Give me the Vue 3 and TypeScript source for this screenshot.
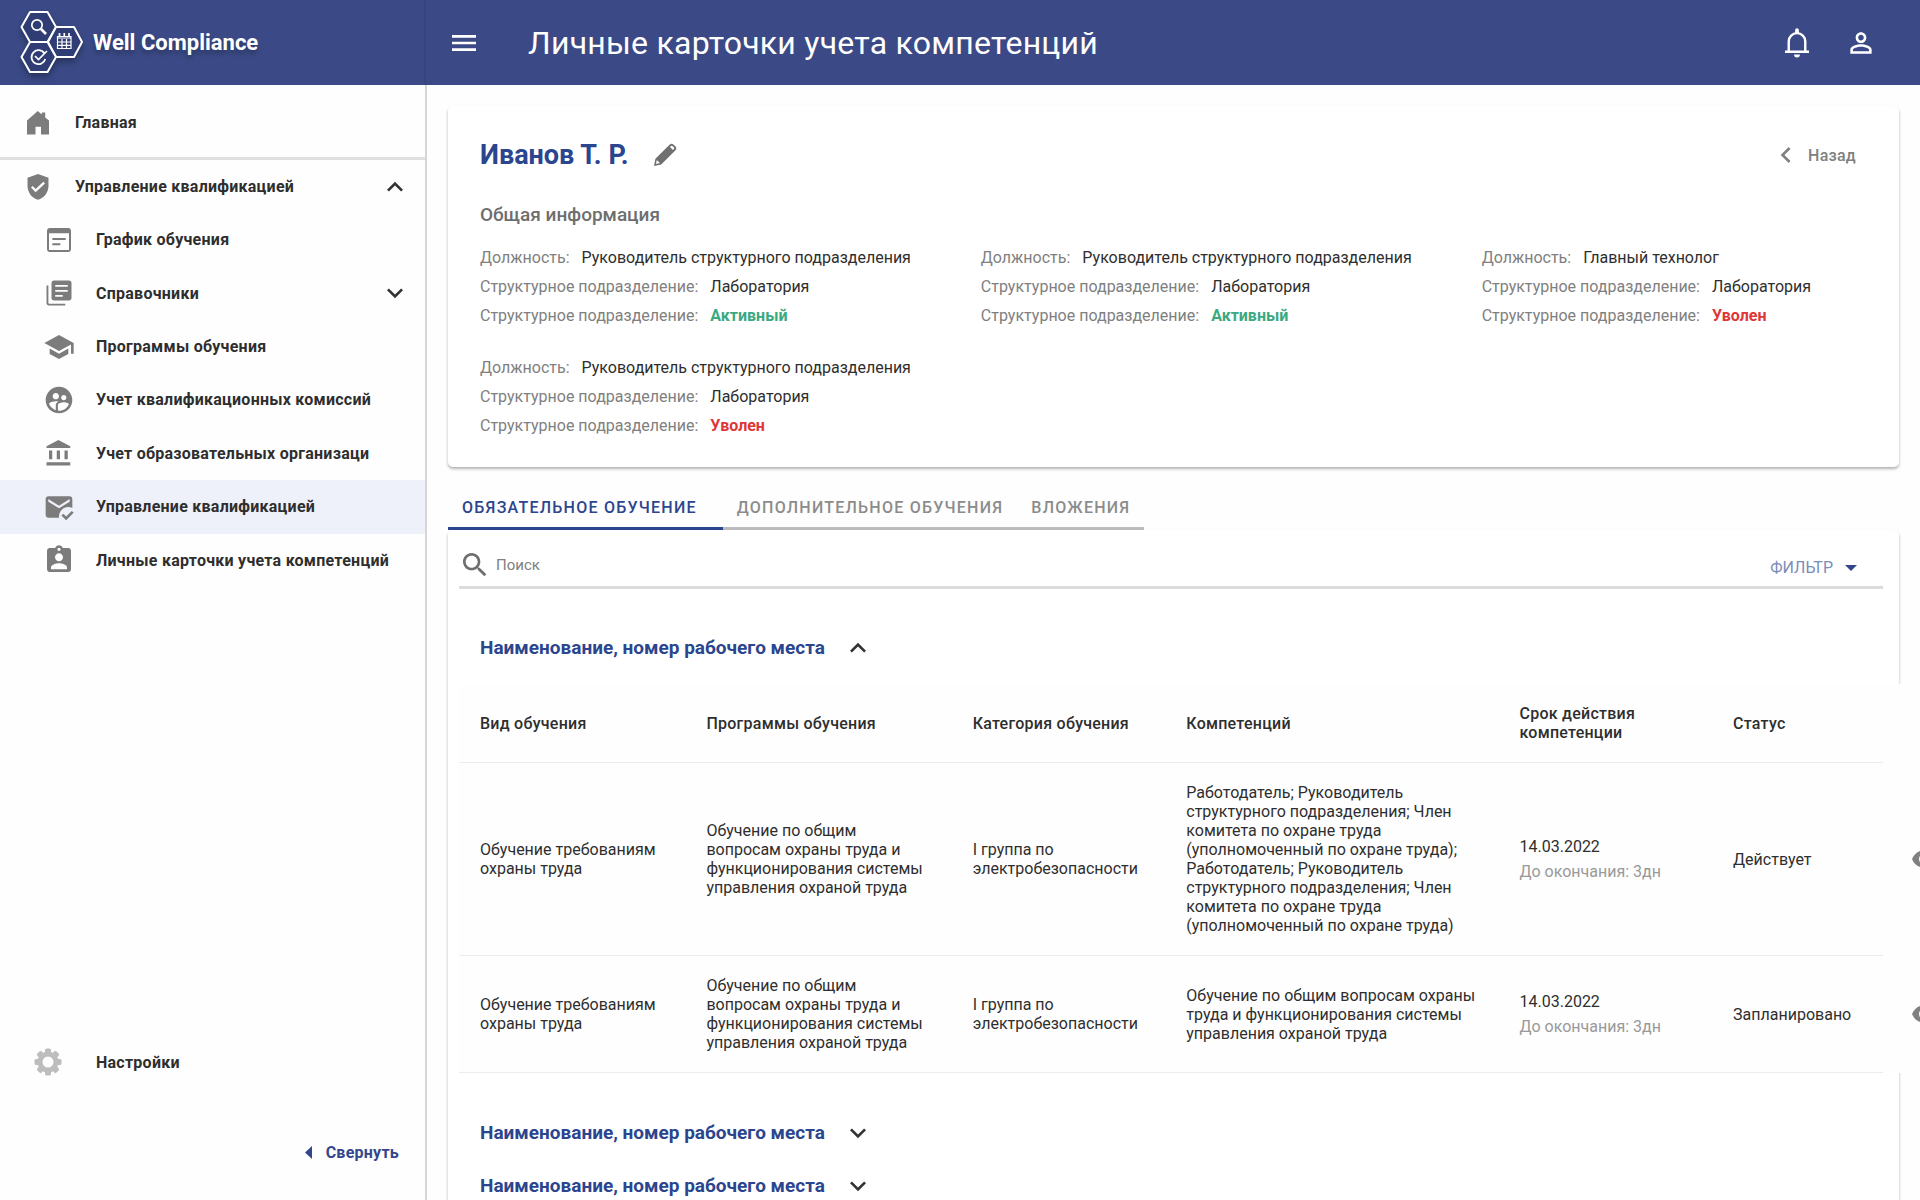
<script setup lang="ts">
import { ref } from 'vue'

interface NavItem {
  label: string
  icon: string
  active?: boolean
  expandable?: boolean
}

interface Position {
  post: string
  unit: string
  state: string
  fired: boolean
}

interface TrainingRow {
  kind: string
  program: string
  category: string
  competence: string
  date: string
  left: string
  status: string
}

const icons: Record<string, string> = {
  schedule:
    'M19 3H5c-1.11 0-2 .9-2 2v14c0 1.1.89 2 2 2h14c1.1 0 2-.9 2-2V5c0-1.1-.89-2-2-2zm.5 16.5h-15V7h15v12.500zM17 12H7v-1.500h10V12zm-4 4H7v-1.500h6V16z',
  library:
    'M3.500 6H2v14c0 1.100.9 2 2 2h13v-1.500H4c-.3 0-.5-.2-.5-.5V6zM20 2H8c-1.100 0-2 .9-2 2v12c0 1.100.9 2 2 2h12c1.100 0 2-.9 2-2V4c0-1.100-.9-2-2-2zm-1 9H9V9.500h10V11zm-4 4H9v-1.500h6V15zm4-8H9V5.500h10V7z',
  school: 'M5 13.180v4L12 21l7-3.820v-4L12 17l-7-3.820zM12 3 1 9l11 6 9-4.910V17h2V9L12 3z',
  commission:
    'M11.990 2c-5.520 0-10 4.480-10 10s4.480 10 10 10 10-4.480 10-10-4.480-10-10-10zm3.610 6.340c1.070 0 1.930.860 1.930 1.930 0 1.070-.860 1.930-1.930 1.930-1.070 0-1.930-.860-1.930-1.930-.010-1.070.860-1.930 1.930-1.930zm-6-1.580c1.300 0 2.360 1.060 2.360 2.360 0 1.300-1.060 2.360-2.360 2.360s-2.360-1.060-2.360-2.360c0-1.310 1.050-2.360 2.360-2.360zm0 9.130v3.750c-2.400-.750-4.300-2.600-5.140-4.960 1.050-1.120 3.670-1.690 5.140-1.690.530 0 1.200.080 1.900.220-1.640.870-1.900 2.020-1.900 2.680zM11.990 20c-.270 0-.530-.010-.790-.040v-4.070c0-1.420 2.940-2.130 4.400-2.130 1.070 0 2.920.390 3.840 1.150-1.170 2.970-4.060 5.090-7.450 5.090z',
  bank: 'M4 10v7h2.600v-7H4zm6.200 0v7h2.600v-7h-2.600zM2 22h19v-2.600H2V22zm14.400-12v7H19v-7h-2.600zM11.500 1.500 2 6.500V8h19V6.500l-9.500-5z',
  mail: 'M12 19c0-3.870 3.130-7 7-7 1.080 0 2.090.250 3 .680V6c0-1.100-.900-2-2-2H4c-1.100 0-2 .900-2 2v12c0 1.100.900 2 2 2h8.080c-.050-.330-.080-.660-.080-1zM4 6l8 5 8-5v2l-8 5-8-5V6zM17.340 22l-3.540-3.540 1.410-1.410 2.120 2.120 4.240-4.240L23 16.340 17.340 22z',
  badge:
    'M19 3h-4.180C14.400 1.840 13.300 1 12 1c-1.300 0-2.400.840-2.820 2H5c-1.100 0-2 .900-2 2v14c0 1.100.900 2 2 2h14c1.100 0 2-.900 2-2V5c0-1.100-.900-2-2-2zm-7-.200c.660 0 1.200.540 1.200 1.200s-.540 1.200-1.200 1.200-1.200-.540-1.200-1.200.540-1.200 1.200-1.200zM12 7c1.660 0 3 1.340 3 3s-1.340 3-3 3-3-1.340-3-3 1.340-3 3-3zm6 12H6v-1.400c0-2 4-3.100 6-3.100s6 1.100 6 3.100V19z',
}

const navItems: NavItem[] = [
  { label: 'График обучения', icon: 'schedule' },
  { label: 'Справочники', icon: 'library', expandable: true },
  { label: 'Программы обучения', icon: 'school' },
  { label: 'Учет квалификационных комиссий', icon: 'commission' },
  { label: 'Учет образовательных организаци', icon: 'bank' },
  { label: 'Управление квалификацией', icon: 'mail', active: true },
  { label: 'Личные карточки учета компетенций', icon: 'badge' },
]

const positions: Position[] = [
  { post: 'Руководитель структурного подразделения', unit: 'Лаборатория', state: 'Активный', fired: false },
  { post: 'Руководитель структурного подразделения', unit: 'Лаборатория', state: 'Активный', fired: false },
  { post: 'Главный технолог', unit: 'Лаборатория', state: 'Уволен', fired: true },
  { post: 'Руководитель структурного подразделения', unit: 'Лаборатория', state: 'Уволен', fired: true },
]

const tabs = ['Обязательное обучение', 'Дополнительное обучения', 'Вложения']
const activeTab = ref(0)
const search = ref('')

const columns = [
  'Вид обучения',
  'Программы обучения',
  'Категория обучения',
  'Компетенций',
  'Срок действия компетенции',
  'Статус',
]

const rows: TrainingRow[] = [
  {
    kind: 'Обучение требованиям охраны труда',
    program: 'Обучение по общим вопросам охраны труда и функционирования системы управления охраной труда',
    category: 'I группа по электробезопасности',
    competence:
      'Работодатель; Руководитель структурного подразделения; Член комитета по охране труда (уполномоченный по охране труда); Работодатель; Руководитель структурного подразделения; Член комитета по охране труда (уполномоченный по охране труда)',
    date: '14.03.2022',
    left: 'До окончания: 3дн',
    status: 'Действует',
  },
  {
    kind: 'Обучение требованиям охраны труда',
    program: 'Обучение по общим вопросам охраны труда и функционирования системы управления охраной труда',
    category: 'I группа по электробезопасности',
    competence: 'Обучение по общим вопросам охраны труда и функционирования системы управления охраной труда',
    date: '14.03.2022',
    left: 'До окончания: 3дн',
    status: 'Запланировано',
  },
]

const groupTitle = 'Наименование, номер рабочего места'
const chevronUp = 'M12 8l-6 6 1.410 1.410L12 10.830l4.590 4.580L18 14z'
const chevronDown = 'M16.590 8.590 12 13.170 7.410 8.590 6 10l6 6 6-6z'
const gearTeeth = [0, 45, 90, 135, 180, 225, 270, 315]
</script>

<template>
  <div class="app">
    <header class="topbar">
      <a class="brand" href="#">
        <svg class="logo" viewBox="0 0 64 64" aria-hidden="true">
          <g fill="#2f3d74" stroke="#fff" stroke-width="2" stroke-linejoin="round">
            <path d="M1.500 17 10 2h17.500L36 17l-8.500 15H10z" />
            <path d="M28 32l8-15h18l8 15-8 15H36z" />
            <path d="M1.500 47 10 32h17.500L36 47l-8.500 15H10z" />
          </g>
          <g fill="none" stroke="#fff" stroke-width="1.700">
            <circle cx="17" cy="15" r="5.200" />
            <path d="M21 19l5 5" stroke-width="2.600" />
            <path d="M24.500 43.500a7 7 0 1 0 .800 5.500" />
            <path d="M15 46l3.500 3.500L27 41" />
            <path d="M37.500 26.500h13.500v12H37.500zM37.500 28h13.500M37.500 32h13.500M37.500 35.300h13.500M42 29v9.500M46.500 29v9.500" stroke-width="1.200" />
            <path d="M39.500 23v4M44.300 23v4M49 23v4" />
          </g>
        </svg>
        <span class="brand-name">Well Compliance</span>
      </a>
      <button class="icon-btn menu-btn" type="button" aria-label="Меню">
        <svg class="i32" viewBox="0 0 24 24"><path d="M3 18h18v-2H3v2zm0-5h18v-2H3v2zm0-7v2h18V6H3z" /></svg>
      </button>
      <h1 class="page-title">Личные карточки учета компетенций</h1>
      <button class="icon-btn" type="button" aria-label="Уведомления">
        <svg class="i32" viewBox="0 0 24 24">
          <path
            fill="none"
            stroke="currentColor"
            stroke-width="1.800"
            d="M5.800 18.500V10.800a6.200 6.200 0 0 1 12.400 0V18.500M3 18.600h18"
          />
          <path d="M10.600 4.800V2.400a1.400 1.400 0 0 1 2.800 0V4.800zM9.800 20.700h4.400a2.200 2.200 0 0 1-4.400 0z" />
        </svg>
      </button>
      <button class="icon-btn" type="button" aria-label="Профиль">
        <svg class="i32" viewBox="0 0 24 24">
          <path
            d="M12 5.900c1.160 0 2.100.940 2.100 2.100s-.940 2.100-2.100 2.100S9.900 9.160 9.900 8s.940-2.100 2.100-2.100m0 9c2.970 0 6.100 1.460 6.100 2.100v1.100H5.900V17c0-.640 3.130-2.100 6.100-2.100M12 4C9.790 4 8 5.790 8 8s1.790 4 4 4 4-1.790 4-4-1.790-4-4-4zm0 9c-2.670 0-8 1.340-8 4v3h16v-3c0-2.660-5.330-4-8-4z"
          />
        </svg>
      </button>
    </header>

    <div class="body">
      <aside class="sidebar">
        <nav class="nav">
          <a class="nav-top home" href="#">
            <svg class="home-icon" viewBox="0 0 22 24">
              <path d="M0 9.500 10.800 0l4 3.400V1.500h3.400v5L22 9.600V23.500h-8v-7.700H8.500v7.700H0z" />
            </svg>
            <span>Главная</span>
          </a>
          <button class="nav-top section" type="button" aria-expanded="true">
            <svg class="shield-icon" viewBox="0 0 24 24">
              <path
                d="M12 .800 3 4v7c0 5.550 3.840 10.740 9 12 5.160-1.260 9-6.450 9-12V4l-9-3.200zM10 16.500l-4-4 1.410-1.410L10 13.670l6.590-6.090L18 9l-8 7.500z"
              />
            </svg>
            <span class="grow">Управление квалификацией</span>
            <svg class="i32 dark" viewBox="0 0 24 24"><path :d="chevronUp" /></svg>
          </button>
          <ul class="nav-list">
            <li v-for="item in navItems" :key="item.label">
              <a class="nav-item" :class="{ active: item.active }" href="#">
                <svg class="nav-icon" :class="item.icon" viewBox="0 0 24 24"><path :d="icons[item.icon]" /></svg>
                <span class="grow">{{ item.label }}</span>
                <svg v-if="item.expandable" class="i32 dark" viewBox="0 0 24 24"><path :d="chevronDown" /></svg>
              </a>
            </li>
          </ul>
        </nav>
        <div class="side-foot">
          <a class="settings" href="#">
            <svg class="gear" viewBox="0 0 28 28">
              <rect
                v-for="angle in gearTeeth"
                :key="angle"
                x="11"
                y="0.500"
                width="6"
                height="6"
                rx="1.500"
                :transform="`rotate(${angle} 14 14)`"
              />
              <circle cx="14" cy="14" r="8" fill="none" stroke="currentColor" stroke-width="5" />
            </svg>
            <span>Настройки</span>
          </a>
          <button class="collapse" type="button">
            <svg class="collapse-arrow" viewBox="0 0 7 13"><path d="M7 0v13L0 6.500z" /></svg>
            <span>Свернуть</span>
          </button>
        </div>
      </aside>

      <main class="content">
        <section class="card info">
          <div class="info-head">
            <h2 class="person">Иванов Т. Р.</h2>
            <button class="icon-btn edit" type="button" aria-label="Редактировать">
              <svg class="pencil" viewBox="0 0 24 24">
                <path
                  fill-rule="evenodd"
                  d="M1 23l1.400-7.200L16.500 1.700a3 3 0 0 1 4.200 0l1.600 1.600a3 3 0 0 1 0 4.200L8.200 21.600zM3.800 17l-.800 3.900 3.900-.800zM18 3l-1 1 3 3 1-1a1 1 0 0 0 0-1.400L19.400 3a1 1 0 0 0-1.400 0z"
                />
              </svg>
            </button>
            <a class="back" href="#">
              <svg class="i32" viewBox="0 0 24 24"><path d="M15.410 7.410 14 6l-6 6 6 6 1.410-1.410L10.830 12z" /></svg>
              <span>Назад</span>
            </a>
          </div>
          <h3 class="sub">Общая информация</h3>
          <div class="positions">
            <dl v-for="(p, i) in positions" :key="i" class="position">
              <div>
                <dt>Должность:</dt>
                <dd>{{ p.post }}</dd>
              </div>
              <div>
                <dt>Структурное подразделение:</dt>
                <dd>{{ p.unit }}</dd>
              </div>
              <div>
                <dt>Структурное подразделение:</dt>
                <dd :class="p.fired ? 'fired' : 'working'">{{ p.state }}</dd>
              </div>
            </dl>
          </div>
        </section>

        <div class="tabs" role="tablist">
          <button
            v-for="(tab, i) in tabs"
            :key="tab"
            class="tab"
            :class="{ current: i === activeTab }"
            type="button"
            role="tab"
            :aria-selected="i === activeTab"
            @click="activeTab = i"
          >
            {{ tab }}
          </button>
        </div>

        <section class="card panel">
          <div class="toolbar">
            <label class="search">
              <svg class="i32" viewBox="0 0 24 24">
                <path
                  d="M15.500 14h-.790l-.280-.270C15.410 12.590 16 11.110 16 9.500 16 5.910 13.090 3 9.500 3S3 5.910 3 9.500 5.910 16 9.500 16c1.610 0 3.090-.590 4.230-1.570l.270.280v.790l5 4.990L20.490 19l-4.990-5zm-6 0C7.010 14 5 11.990 5 9.500S7.010 5 9.500 5 14 7.010 14 9.500 11.990 14 9.500 14z"
                />
              </svg>
              <input v-model="search" type="text" placeholder="Поиск" aria-label="Поиск" />
            </label>
            <button class="filter" type="button">
              <span>ФИЛЬТР</span>
              <svg class="filter-arrow" viewBox="0 0 12 6"><path d="M0 0h12L6 6z" /></svg>
            </button>
          </div>

          <button class="group first" type="button" aria-expanded="true">
            <span>{{ groupTitle }}</span>
            <svg class="i32 dark" viewBox="0 0 24 24"><path :d="chevronUp" /></svg>
          </button>

          <div class="table-wrap">
            <table class="table">
              <colgroup>
                <col v-for="n in 6" :key="n" :class="`c${n}`" />
              </colgroup>
              <thead>
                <tr>
                  <th v-for="column in columns" :key="column" scope="col">{{ column }}</th>
                </tr>
              </thead>
              <tbody>
                <tr v-for="(row, i) in rows" :key="i">
                  <td>{{ row.kind }}</td>
                  <td>{{ row.program }}</td>
                  <td>{{ row.category }}</td>
                  <td>{{ row.competence }}</td>
                  <td>
                    <span class="date">{{ row.date }}</span>
                    <span class="left">{{ row.left }}</span>
                  </td>
                  <td class="status">
                    {{ row.status }}
                    <button class="icon-btn view" type="button" aria-label="Просмотр">
                      <svg class="eye" viewBox="0 0 26 18">
                        <path
                          fill-rule="evenodd"
                          d="M13 0C7 0 2 3.700 0 9c2 5.300 7 9 13 9s11-3.700 13-9c-2-5.300-7-9-13-9zm0 15a6 6 0 1 1 0-12 6 6 0 0 1 0 12zm0-9.500a3.500 3.500 0 1 0 0 7 3.500 3.500 0 0 0 0-7z"
                        />
                      </svg>
                    </button>
                  </td>
                </tr>
              </tbody>
            </table>
          </div>

          <div class="closed-groups">
            <button v-for="n in 2" :key="n" class="group" type="button" aria-expanded="false">
              <span>{{ groupTitle }}</span>
              <svg class="i32 dark" viewBox="0 0 24 24"><path :d="chevronDown" /></svg>
            </button>
          </div>
        </section>
      </main>
    </div>
  </div>
</template>

<style>
body {
  margin: 0;
  background: #fefefe;
}
</style>

<style scoped>
.app {
  display: flex;
  flex-direction: column;
  height: 100vh;
  overflow: hidden;
  font-family: Roboto, "Liberation Sans", sans-serif;
  font-size: 16px;
  color: #2e2e2e;
}

.app * {
  box-sizing: border-box;
}

svg {
  display: block;
  flex: none;
  fill: currentColor;
}

button {
  padding: 0;
  border: 0;
  background: none;
  font: inherit;
  letter-spacing: inherit;
  color: inherit;
  cursor: pointer;
}

a {
  color: inherit;
  text-decoration: none;
}

h1,
h2,
h3,
ul,
dl,
dd {
  margin: 0;
  padding: 0;
}

.i32 {
  width: 32px;
  height: 32px;
}

.dark {
  color: #333;
}

.grow {
  flex: 1;
}

/* Top bar */
.topbar {
  display: flex;
  flex: none;
  align-items: center;
  height: 85px;
  padding-right: 43px;
  background: #3b4a86;
  color: #fff;
}

.brand {
  display: flex;
  flex: none;
  align-items: center;
  gap: 9px;
  width: 426px;
  height: 100%;
  padding-left: 20px;
  border-right: 2px solid #37457d;
}

.logo {
  width: 64px;
  height: 64px;
  margin-bottom: 2px;
  filter: drop-shadow(0 4px 3px rgba(0, 0, 0, 0.3));
}

.brand-name {
  font-size: 22px;
  font-weight: 700;
  text-shadow: 0 4px 4px rgba(0, 0, 0, 0.25);
}

.icon-btn {
  display: flex;
}

.menu-btn {
  margin-left: 22px;
}

.page-title {
  flex: 1;
  margin-left: 48px;
  font-size: 32px;
  font-weight: 400;
  letter-spacing: 0.25px;
}

.topbar .icon-btn + .icon-btn {
  margin-left: 32px;
}

/* Sidebar */
.body {
  display: flex;
  flex: 1;
  min-height: 0;
}

.sidebar {
  display: flex;
  flex: none;
  flex-direction: column;
  justify-content: space-between;
  width: 427px;
  border-right: 2px solid #d6d6d6;
  font-weight: 700;
  letter-spacing: 0.25px;
}

.nav-top {
  display: flex;
  align-items: center;
  width: 100%;
  padding: 0 14px 0 24px;
  text-align: left;
}

.home {
  height: 75px;
  padding-top: 3px;
  border-bottom: 3px solid #e0e0e0;
}

.section {
  height: 53px;
  font-weight: 700;
}

.home-icon {
  width: 22px;
  height: 24px;
  margin: 0 26px 0 3px;
  color: #7c7c7c;
}

.shield-icon {
  width: 28px;
  height: 28px;
  margin-right: 23px;
  color: #7c7c7c;
}

.nav-list {
  display: grid;
  grid-auto-rows: 1fr;
  height: 374px;
  list-style: none;
}

.nav-item {
  display: flex;
  align-items: center;
  height: 100%;
  padding: 0 14px 0 43px;
}

.nav-item.active {
  background: #eef1f9;
}

.nav-icon {
  width: 32px;
  height: 32px;
  margin-right: 21px;
  color: #7c7c7c;
}

.nav-icon.library,
.nav-icon.bank {
  padding: 1px;
}

.side-foot {
  display: flex;
  flex-direction: column;
  gap: 58px;
  padding-bottom: 32px;
}

.settings {
  display: flex;
  align-items: center;
  gap: 34px;
  height: 32px;
  padding-left: 34px;
}

.gear {
  width: 28px;
  height: 28px;
  color: #bdbdbd;
}

.collapse {
  display: flex;
  align-items: center;
  align-self: flex-end;
  gap: 14px;
  height: 32px;
  margin-right: 26px;
  font-weight: 700;
  color: #34478d;
}

.collapse-arrow {
  width: 7px;
  height: 13px;
}

/* Content */
.content {
  display: flex;
  flex: 1;
  flex-direction: column;
  min-width: 0;
  padding: 21px 21px 0;
}

.card {
  border-radius: 5px;
  background: #fff;
  box-shadow: 0 2px 3px rgba(0, 0, 0, 0.3);
}

.info {
  flex: none;
  padding: 32px 0 27px 32px;
}

.info-head {
  display: flex;
  align-items: center;
  height: 34px;
  padding-right: 43px;
}

.person {
  font-size: 27px;
  font-weight: 700;
  color: #2b458e;
}

.edit {
  margin-left: 24px;
  color: #707070;
}

.pencil {
  width: 24px;
  height: 24px;
}

.back {
  display: flex;
  align-items: center;
  gap: 6px;
  margin-left: auto;
  font-weight: 500;
  letter-spacing: 0.25px;
  color: #808080;
}

.sub {
  margin-top: 31px;
  font-size: 19px;
  font-weight: 500;
  line-height: 24px;
  color: #6e6e6e;
}

.positions {
  display: grid;
  grid-template-columns: 6fr 6fr 5fr;
  row-gap: 23px;
  margin-top: 16px;
}

.position div {
  display: flex;
  gap: 12px;
  line-height: 29px;
  white-space: nowrap;
}

.position dt {
  color: #808080;
}

.working {
  font-weight: 700;
  color: #3aa981;
}

.fired {
  font-weight: 700;
  color: #e03636;
}

/* Tabs */
.tabs {
  display: flex;
  flex: none;
  align-self: flex-start;
  height: 63px;
  padding-top: 21px;
}

.tab {
  padding: 0 14px;
  border-bottom: 3px solid #bcbcbc;
  font-weight: 500;
  letter-spacing: 1.25px;
  text-transform: uppercase;
  color: #8c8c8c;
}

.tab.current {
  padding-right: 26px;
  border-color: #2b458e;
  color: #2b458e;
}

/* Training panel */
.panel {
  flex: 1 0 auto;
}

.toolbar {
  display: flex;
  align-items: center;
  height: 59px;
  margin: 0 16px 0 11px;
  padding: 14px 26px 0 0;
  border-bottom: 3px solid #dcdcdc;
}

.search {
  display: flex;
  flex: 1;
  align-items: center;
  gap: 5px;
  color: #6e6e6e;
}

.search input {
  flex: 1;
  padding: 0;
  border: 0;
  outline: 0;
  background: none;
  font: inherit;
  font-size: 15px;
  color: #333;
}

.search input::placeholder {
  color: #808080;
}

.filter {
  display: flex;
  align-items: center;
  gap: 12px;
  padding-top: 5px;
  color: #7b8db8;
}

.filter-arrow {
  width: 12px;
  height: 6px;
  color: #34478d;
}

.group {
  display: flex;
  align-items: center;
  gap: 17px;
  height: 53px;
  padding-left: 32px;
  font-size: 19px;
  font-weight: 700;
  color: #2b458e;
}

.group.first {
  margin: 32px 0 10px;
}

.table-wrap {
  margin: 0 -21px 0 11px;
  padding-right: 37px;
  background: #fefefe;
}

.table {
  width: 100%;
  border-collapse: collapse;
  table-layout: fixed;
  line-height: 19px;
}

.c1 {
  width: 15.9%;
}

.c2 {
  width: 18.7%;
}

.c3 {
  width: 15%;
}

.c4 {
  width: 23.4%;
}

.c5 {
  width: 15%;
}

.c6 {
  width: 12%;
}

th,
td {
  padding: 20px 20px 20px 21px;
  border-bottom: 1px solid #ececec;
  text-align: left;
  vertical-align: middle;
}

th {
  font-weight: 500;
  letter-spacing: 0.25px;
}

.date,
.left {
  display: block;
  line-height: 25px;
}

.left {
  color: #999;
}

.status {
  position: relative;
}

.view {
  position: absolute;
  top: 50%;
  left: 100%;
  margin: -9px 0 0 29px;
  color: #808080;
}

.eye {
  width: 26px;
  height: 18px;
}

.closed-groups {
  display: flex;
  flex-direction: column;
  padding-top: 33px;
}
</style>
